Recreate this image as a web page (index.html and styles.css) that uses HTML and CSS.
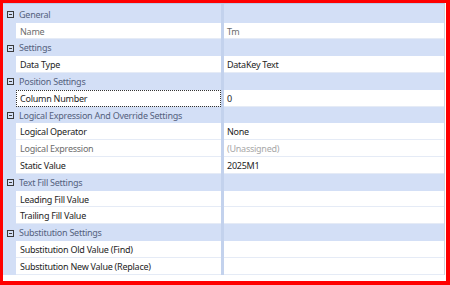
FILE: index.html
```html
<!DOCTYPE html>
<html>
<head>
<meta charset="utf-8">
<link rel="stylesheet" href="styles.css">
</head>
<body>
<div class="frame">
  <div class="grid">
    <div class="row cat first"><div class="catlabel"><span class="tog"></span>General</div><div class="split"></div><div class="val"></div></div>
    <div class="row"><div class="gut"></div><div class="name ro">Name</div><div class="split"></div><div class="val ro">Tm</div></div>
    <div class="row cat"><div class="catlabel"><span class="tog"></span>Settings</div><div class="split"></div><div class="val"></div></div>
    <div class="row"><div class="gut"></div><div class="name">Data Type</div><div class="split"></div><div class="val">DataKey Text</div></div>
    <div class="row cat"><div class="catlabel"><span class="tog"></span>Position Settings</div><div class="split"></div><div class="val"></div></div>
    <div class="row"><div class="gut"></div><div class="name focus">Column Number</div><div class="split"></div><div class="val">0</div></div>
    <div class="row cat"><div class="catlabel"><span class="tog"></span>Logical Expression And Override Settings</div><div class="split"></div><div class="val"></div></div>
    <div class="row"><div class="gut"></div><div class="name">Logical Operator</div><div class="split"></div><div class="val">None</div></div>
    <div class="row"><div class="gut"></div><div class="name ro">Logical Expression</div><div class="split"></div><div class="val dim">(Unassigned)</div></div>
    <div class="row"><div class="gut"></div><div class="name">Static Value</div><div class="split"></div><div class="val">2025M1</div></div>
    <div class="row cat"><div class="catlabel"><span class="tog"></span>Text Fill Settings</div><div class="split"></div><div class="val"></div></div>
    <div class="row"><div class="gut"></div><div class="name">Leading Fill Value</div><div class="split"></div><div class="val"></div></div>
    <div class="row"><div class="gut"></div><div class="name">Trailing Fill Value</div><div class="split"></div><div class="val"></div></div>
    <div class="row cat"><div class="catlabel"><span class="tog"></span>Substitution Settings</div><div class="split"></div><div class="val"></div></div>
    <div class="row"><div class="gut"></div><div class="name">Substitution Old Value (Find)</div><div class="split"></div><div class="val"></div></div>
    <div class="row"><div class="gut"></div><div class="name">Substitution New Value (Replace)</div><div class="split"></div><div class="val"></div></div>
  </div>
</div>
</body>
</html>
```
FILE: styles.css
```css
html, body {
  margin: 0;
  padding: 0;
}
body {
  width: 450px;
  height: 285px;
  background: #ff0000;
  font-family: "Noto Sans", "Open Sans", sans-serif;
  font-size: 9px;
  letter-spacing: -0.25px;
  color: #1e1e1e;
  overflow: hidden;
}
.frame {
  margin: 3px 4px 0 3px;
  height: 278px;
  background: #ffffff;
  box-sizing: border-box;
}
.grid {
  width: 442px;
  border-top: 1px solid #b9cbe9;
  border-right: 1px solid #cfd3da;
  box-sizing: border-box;
  display: flex;
  flex-direction: column;
}
.row {
  display: flex;
  height: 16.8px;
  box-sizing: border-box;
}
.row.first {
  height: 18.7px;
  padding-top: 2px;
}
.gut {
  width: 13px;
  flex: none;
  background: #d3dff6;
}
.name {
  width: 205px;
  flex: none;
  padding: 1px 0 0 4px;
  line-height: 16px;
  border-bottom: 1px solid #e5ebf6;
  box-sizing: border-box;
  white-space: nowrap;
  overflow: hidden;
}
.split {
  width: 3px;
  flex: none;
  background: #c3d2ed;
}
.val {
  flex: 1;
  padding: 1px 0 0 3px;
  line-height: 16px;
  border-bottom: 1px solid #e5ebf6;
  box-sizing: border-box;
  white-space: nowrap;
}
.ro {
  color: #6d6d6d;
}
.dim {
  color: #a8a8a8;
}
.focus {
  outline: 1px dotted #333333;
  outline-offset: -1px;
}
.cat {
  background: #d3dff6;
}
.first .split {
  margin-top: -2px;
}
.cat .val {
  border-bottom: none;
}
.catlabel {
  width: 218px;
  flex: none;
  display: flex;
  align-items: center;
  padding-top: 1px;
  box-sizing: border-box;
  color: #55627e;
  line-height: 16px;
  white-space: nowrap;
  position: relative;
  z-index: 1;
}
.tog {
  width: 7px;
  height: 7px;
  border: 1px solid #3b3b3b;
  box-sizing: border-box;
  margin: 0 5px 0 4px;
  position: relative;
  flex: none;
}
.tog::after {
  content: "";
  position: absolute;
  left: 1px;
  top: 2px;
  width: 3px;
  height: 1px;
  background: #3b3b3b;
}
```
